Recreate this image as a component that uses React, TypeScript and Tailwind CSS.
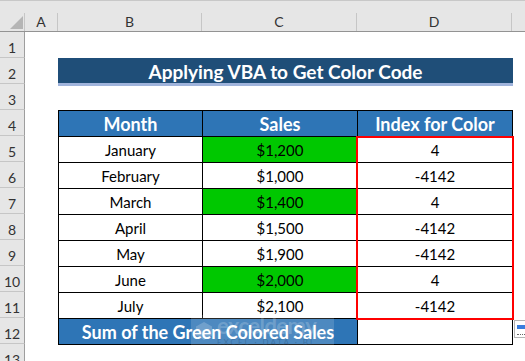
import React from "react";

const rowNums = [1, 2, 3, 4, 5, 6, 7, 8, 9, 10, 11, 12, 13];

const data = [
  { m: "January", s: "$1,200", i: "4", g: true },
  { m: "February", s: "$1,000", i: "-4142", g: false },
  { m: "March", s: "$1,400", i: "4", g: true },
  { m: "April", s: "$1,500", i: "-4142", g: false },
  { m: "May", s: "$1,900", i: "-4142", g: false },
  { m: "June", s: "$2,000", i: "4", g: true },
  { m: "July", s: "$2,100", i: "-4142", g: false },
];

export default function App() {
  return (
    <div className="relative w-[525px] h-[361px] overflow-hidden bg-white font-['Lato','Liberation_Sans',sans-serif] text-black">
      {/* top strip */}
      <div className="h-[13px] bg-[#e6e6e6] border-t border-[#c8c8c8]" />
      {/* column headers */}
      <div className="flex h-[19px] bg-[#e6e6e6] border-b border-[#939393] text-[14px] text-[#333] leading-[18px]">
        <div className="relative w-[25px] border-r border-[#c6c6c6]">
          <svg className="absolute left-[10px] top-[3px]" width="13" height="13" viewBox="0 0 13 13">
            <polygon points="13,0 13,13 0,13" fill="#b5b5b5" />
          </svg>
        </div>
        <div className="w-[33px] border-r border-[#c6c6c6] text-center">A</div>
        <div className="w-[144px] border-r border-[#c6c6c6] text-center">B</div>
        <div className="w-[155px] border-r border-[#c6c6c6] text-center">C</div>
        <div className="w-[155px] border-r border-[#c6c6c6] text-center">D</div>
        <div className="flex-1" />
      </div>

      <div className="flex">
        {/* row headers */}
        <div className="flex flex-col w-[25px] shrink-0">
          {rowNums.map((n) => (
            <div
              key={n}
              className="h-[26px] shrink-0 bg-[#e6e6e6] border-r border-b border-r-[#9e9e9e] border-b-[#c6c6c6] flex items-end justify-center pb-[2px] text-[14px] text-[#333] leading-none"
            >
              {n}
            </div>
          ))}
        </div>

        {/* sheet */}
        <div className="flex flex-col pl-[33px]">
          <div className="h-[26px]" />
          <div className="w-[455px] h-[28px] bg-[#1f4e78] border-b-[3px] border-[#a0b4dc] flex items-center justify-center text-white font-bold text-[19px] leading-none pt-[1px]">
            Applying VBA to Get Color Code
          </div>
          <div className="h-[24px]" />

          <div className="relative w-[455px] border-l border-t border-black text-[15px]">
            {/* header */}
            <div className="flex h-[26px] bg-[#2e75b6] text-white font-bold text-[18px]">
              <div className="w-[144px] border-r border-b border-black flex items-center justify-center pt-[1px]">Month</div>
              <div className="w-[155px] border-r border-b border-black flex items-center justify-center pt-[1px]">Sales</div>
              <div className="w-[155px] border-r border-b border-black flex items-center justify-center pt-[1px]">Index for Color</div>
            </div>
            {data.map((r) => (
              <div key={r.m} className="flex h-[26px]">
                <div className="w-[144px] border-r border-b border-black flex items-center justify-center pt-[2px]">{r.m}</div>
                <div className={`w-[155px] border-r border-b border-black flex items-center justify-center pt-[2px] ${r.g ? "bg-[#00c800]" : "bg-white"}`}>{r.s}</div>
                <div className="w-[155px] border-r border-b border-black flex items-center justify-center pt-[2px]">{r.i}</div>
              </div>
            ))}
            <div className="flex h-[26px]">
              <div className="w-[299px] bg-[#2e75b6] border-r border-b border-black flex items-center justify-center text-white font-bold text-[18px] pt-[1px]">
                Sum of the Green Colored Sales
              </div>
              <div className="w-[155px] border-r border-b border-black" />
            </div>

            {/* red highlight */}
            <div className="absolute left-[297px] top-[25px] w-[158px] h-[184px] border-2 border-[#ff0000] pointer-events-none" />

            {/* watermark */}
            <div className="absolute left-[132px] top-[204px] w-[143px] h-[31px] bg-white/15 flex items-center gap-[4px] pl-[4px] pointer-events-none">
              <svg width="18" height="20" viewBox="0 0 18 20">
                <polygon points="9,1 17,5.5 17,14.5 9,19 1,14.5 1,5.5" fill="#ffffff" fillOpacity="0.2" />
              </svg>
              <div className="flex flex-col leading-none">
                <span className="text-[22px] font-bold text-white/20 tracking-tight">exceldemy</span>
                <span className="text-[8px] text-[#1f4e78]/40 tracking-[2px] mt-[1px]">EXCEL · DATA · BI</span>
              </div>
            </div>
          </div>
        </div>
      </div>

      {/* quick analysis icon */}
      <div className="absolute left-[514px] top-[320px] w-[16px] h-[18px] border border-[#b5b5b5] bg-white">
        <div className="mt-[4px] ml-[2px] w-[12px] h-[4px] bg-[#3b7ddd]" />
        <div className="mt-[5px] ml-[2px] w-[12px] border-t border-dotted border-[#666]" />
      </div>
    </div>
  );
}
